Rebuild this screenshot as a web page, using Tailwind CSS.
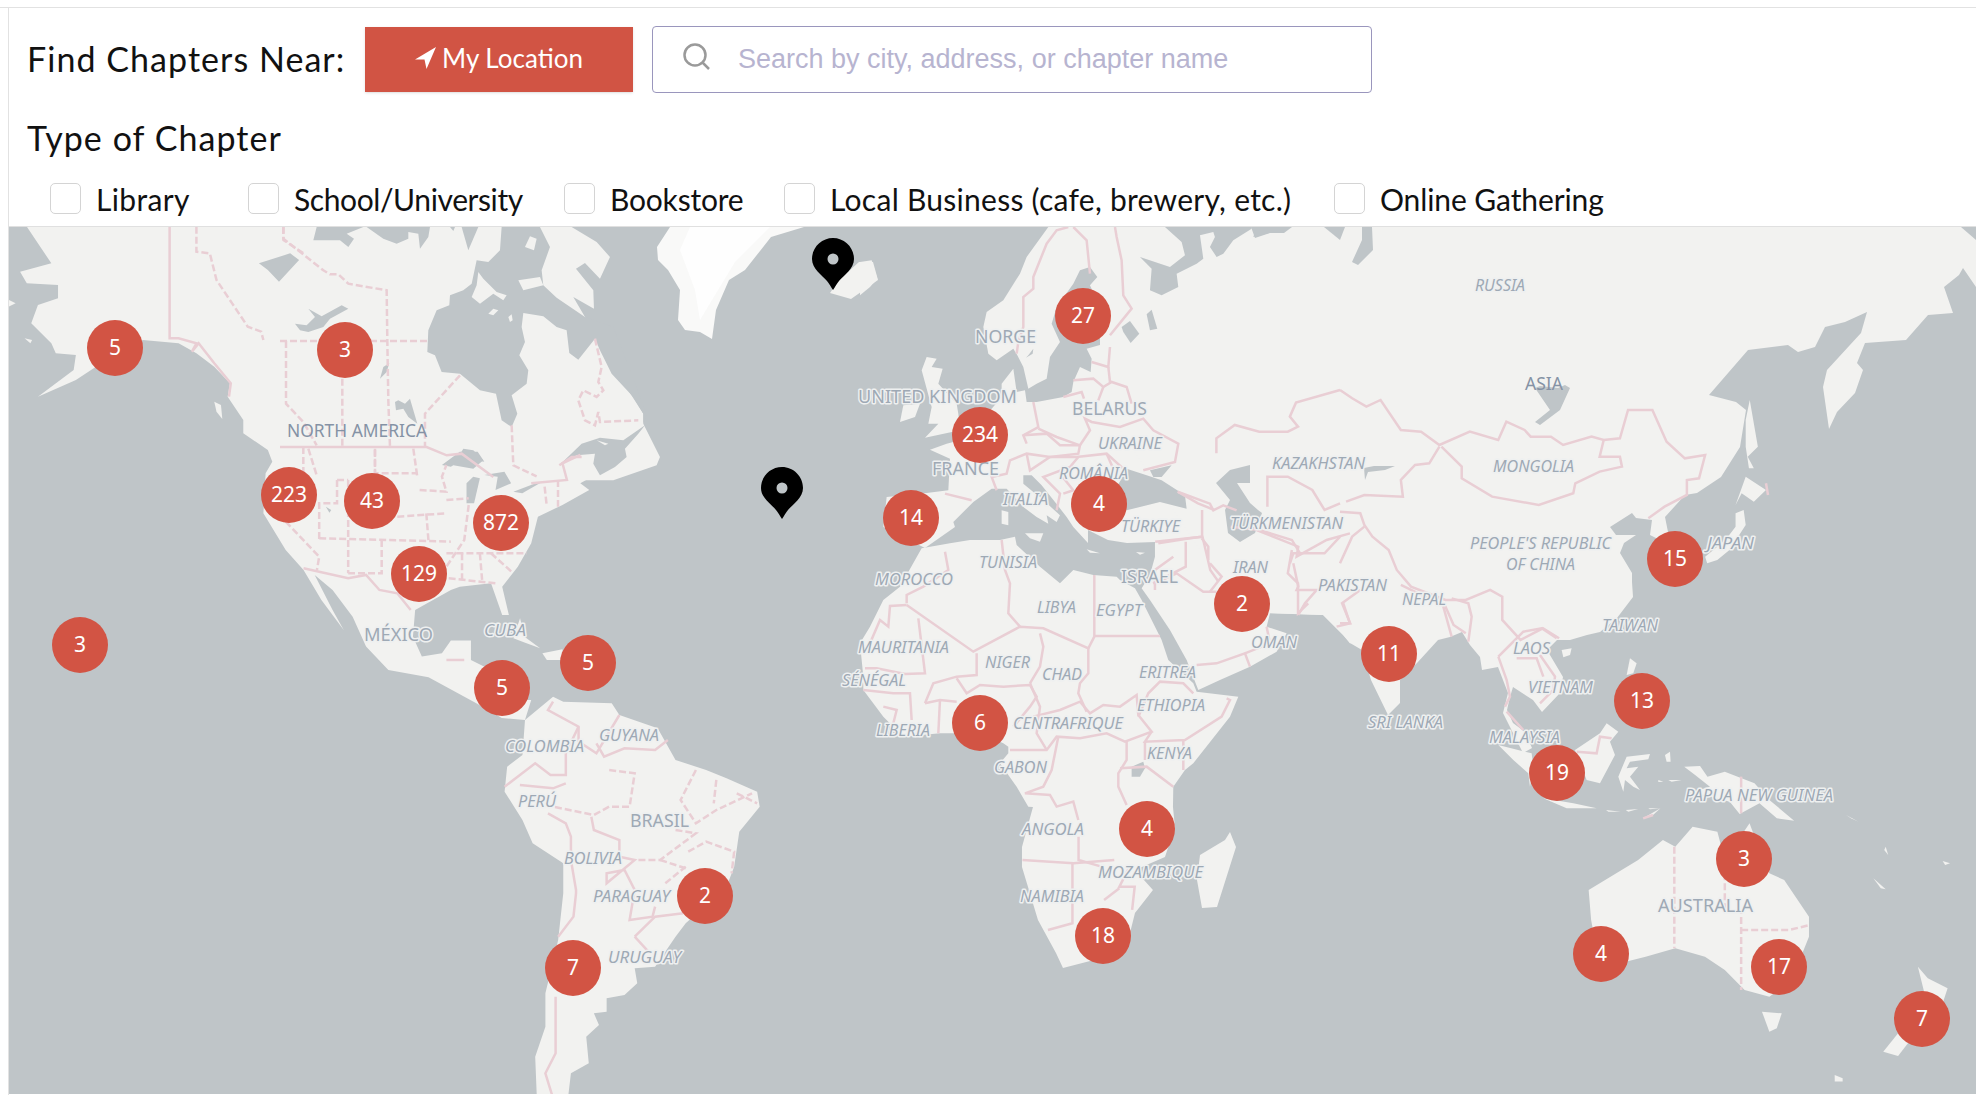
<!DOCTYPE html>
<html lang="en">
<head>
  <meta charset="UTF-8">
  <meta name="viewport" content="width=device-width, initial-scale=1.0">
  <title>Find Chapters</title>
  <script src="https://cdn.jsdelivr.net/npm/@tailwindcss/browser@4"></script>
</head>
<body class="bg-white font-['Lato',sans-serif] text-[#111] pt-[7px] overflow-hidden h-[1102px]">
  <div class="border-t border-[#e2e2e2]">
    <div class="ml-[8px] border-l border-[#e2e2e2] h-[1087px]">

      <!-- Search row -->
      <div class="flex items-center pl-[18px] pt-[17px]">
        <span class="w-[338px] text-[34px] leading-[68px] tracking-[1.05px]">Find Chapters Near:</span>
        <button class="w-[268px] h-[65px] bg-[#d15444] text-white text-[26px] flex items-center justify-center gap-[6px] shadow-sm pb-[2px]">
          <svg width="21" height="22" viewBox="0 0 21 22"><polygon class="fill-white" points="21,0 0,12.500 9.500,12.500 11.500,22"/></svg>
          My Location
        </button>
        <div class="ml-[19px] w-[720px] h-[67px] border border-[#9a96bd] rounded-[4px] flex items-center pl-[29px]">
          <svg width="30" height="27" viewBox="0 0 30 27" class="mb-[6px] fill-none stroke-[#9a9a9a] stroke-[2.500px]"><circle cx="13" cy="12" r="10.500"/><line x1="20.500" y1="19.500" x2="27" y2="26"/></svg>
          <span class="ml-[26px] font-['Liberation_Sans',sans-serif] text-[#b7b4d0] text-[27px]">Search by city, address, or chapter name</span>
        </div>
      </div>

      <!-- Chapter type filters -->
      <h2 class="pl-[18px] mt-[22px] text-[34px] leading-[46px] tracking-[1.05px]">Type of Chapter</h2>
      <div class="grid grid-cols-[198px_316px_220px_550px_auto] pl-[41px] mt-[20px] h-[31px] text-[30px] leading-[33px]">
        <label class="flex items-center gap-[15px] tracking-[0.35px]"><span class="w-[31px] h-[31px] border border-[#d4d4d4] rounded-[5px]"></span><span class="pt-[2px]">Library</span></label>
        <label class="flex items-center gap-[15px] tracking-[-0.4px]"><span class="w-[31px] h-[31px] border border-[#d4d4d4] rounded-[5px]"></span><span class="pt-[2px]">School/University</span></label>
        <label class="flex items-center gap-[15px] tracking-[-0.2px]"><span class="w-[31px] h-[31px] border border-[#d4d4d4] rounded-[5px]"></span><span class="pt-[2px]">Bookstore</span></label>
        <label class="flex items-center gap-[15px] tracking-[0.27px]"><span class="w-[31px] h-[31px] border border-[#d4d4d4] rounded-[5px]"></span><span class="pt-[2px]">Local Business (cafe, brewery, etc.)</span></label>
        <label class="flex items-center gap-[15px] tracking-[-0.1px]"><span class="w-[31px] h-[31px] border border-[#d4d4d4] rounded-[5px]"></span><span class="pt-[2px]">Online Gathering</span></label>
      </div>

      <!-- Map -->
      <div id="map" class="relative mt-[14px] h-[868px] border-t border-[#e0e0e0] bg-[#bfc5c8] overflow-hidden">
        <svg class="block" width="1967" height="867" viewBox="9 227 1967 867">
          <!-- land -->
          <g class="fill-[#f2f2f0]">
            <g transform="translate(0 220) scale(.4464 .3333)">
              <polygon points="60,20 115,130 45,155 60,190 130,195 130,235 85,255 70,310 115,370 125,400 170,405 165,450 85,530 170,480 215,440 320,360 400,370 440,400 480,440 515,490 510,530 545,600 545,640 600,690 610,725 595,760 590,880 640,990 680,1050 720,1140 770,1230 745,1170 705,1065 745,1110 790,1190 820,1280 870,1350 960,1372 1066,1449 1124,1494 1176,1500 1190,1440 1130,1440 1100,1350 1055,1320 1055,1262 1010,1262 990,1300 945,1310 925,1250 930,1170 1010,1110 1030,1100 1100,1090 1125,1185 1140,1185 1125,1100 1160,1040 1190,970 1205,890 1260,855 1320,810 1300,790 1340,760 1400,715 1330,740 1300,700 1250,730 1000,500 1000,20"/>
              <polygon points="480,545 495,555 498,597 485,575"/>
              <polygon points="55,355 72,360 68,370"/>
              <polygon points="20,240 35,250 20,260"/>
              <polygon points="1165,1195 1175,1250 1210,1285 1175,1268 1150,1255"/>
              <polygon points="1215,1300 1260,1288 1262,1320 1225,1320"/>
            </g>
            <g transform="translate(280 227) scale(.3333)">
              <polygon points="0,0 875,0 950,45 990,90 960,155 915,108 888,125 940,190 942,245 880,210 915,270 1000,420 1090,560 1090,590 1140,690 1130,715 1000,760 0,760"/>
            </g>
            <!-- South America -->
            <g transform="translate(400 660) scale(.5102 .3333)">
              <polygon points="245,180 300,110 320,125 415,130 430,165 505,205 540,300 600,330 640,355 700,395 705,440 665,515 655,620 640,680 560,790 540,830 500,920 460,925 465,970 440,1005 405,1015 405,1055 380,1060 390,1095 365,1130 370,1210 335,1240 330,1305 268,1305 265,1190 285,1100 285,1000 310,840 320,700 320,610 260,550 240,480 205,395 210,320 240,285"/>
            </g>
            <!-- Europe -->
            <g transform="translate(860 227) scale(.3333)">
              <polygon points="565,0 500,90 480,140 430,220 380,255 370,300 385,380 410,400 460,365 472,385 490,420 505,485 530,470 560,455 570,390 600,345 575,290 590,240 640,170 660,130 690,120 712,150 690,175 755,320 770,340 680,365 695,395 692,435 660,420 640,465 635,495 610,510 530,525 500,525 495,490 470,495 460,425 425,470 425,510 395,545 360,560 300,640 260,650 210,668 270,695 265,790 200,798 80,810 70,900 195,963 285,900 280,885 340,825 395,785 440,785 490,840 530,870 565,890 560,865 590,885 600,865 540,810 520,795 490,770 490,745 515,745 545,775 585,825 620,870 640,900 684,948 684,909 744,939 801,948 885,945 1300,1000 1300,0"/>
              <polygon points="185,430 200,390 230,395 215,420 248,425 235,470 290,530 295,560 300,610 195,632 235,590 205,590 215,540"/>
              <polygon points="120,585 130,535 180,530 165,570"/>
              <polygon points="425,850 445,855 445,895 425,890"/>
              <polygon points="0,105 35,100 52,155 30,180 0,205"/>
            </g>
            <polygon points="830,293 851,299 878,280 873,262 859,262 839,280"/>
            <!-- Africa and Arabia -->
            <g transform="translate(840 520) scale(.3333)">
              <polygon points="245,85 330,70 390,60 480,60 525,50 530,75 600,140 660,190 700,150 760,165 830,170 840,180 885,205 905,240 965,360 985,420 1060,490 1070,515 1195,530 1170,590 1060,730 1035,750 1000,800 999,861 1005,921 975,1011 885,1050 939,1110 885,1179 870,1239 762,1320 669,1344 648,1299 594,1200 546,1041 546,981 579,861 565,860 530,800 480,730 505,700 505,680 490,670 420,640 300,640 190,650 130,590 70,510 70,470 60,370 90,320 130,240 180,200"/>
              <polygon points="945,65 945,110 930,165 905,205 930,240 990,330 1040,420 1075,510 1140,480 1230,440 1310,395 1340,340 1280,320 1290,280 1450,285 1510,345 1530,370 1560,365 1560,0 945,0"/>
              <polygon points="555,40 610,40 600,65 570,55"/>
              <polygon points="740,88 780,100 750,98"/>
              <polygon points="888,96 915,98 900,104"/>
            </g>
            <polygon points="1230,832 1236,847 1217,907 1202,908 1197,880 1200,855 1225,840"/>
            <!-- Asia -->
            <polygon points="1100,227 1976,227 1976,287 1963,268 1959,275 1944,287 1953,313 1928,315 1906,340 1865,343 1857,363 1863,370 1855,393 1837,412 1829,429 1823,387 1827,370 1861,333 1867,312 1845,322 1825,327 1815,347 1798,352 1788,345 1748,350 1709,395 1736,402 1746,410 1740,447 1721,477 1697,493 1685,495 1665,517 1668,532 1660,540 1650,535 1652,520 1636,518 1632,513 1610,527 1616,535 1636,535 1624,543 1620,553 1632,573 1632,582 1633,597 1617,618 1600,632 1587,635 1570,640 1557,640 1547,650 1563,677 1560,693 1542,712 1533,700 1513,687 1510,697 1507,710 1513,723 1525,732 1532,748 1523,753 1503,713 1508,693 1498,667 1482,670 1480,657 1470,645 1462,632 1450,637 1438,640 1417,663 1400,680 1400,703 1388,715 1371,680 1362,650 1350,643 1343,635 1323,615 1270,613 1270,600 1200,550 1100,400"/>
            <g transform="translate(1340 220) scale(.4057 .3333)">
              <polygon points="1010,540 1030,680 1005,710 1020,745 1008,745 1000,680 1000,600"/>
              <polygon points="1000,770 1050,810 1020,845 990,820 975,855"/>
              <polygon points="975,880 995,870 1000,915 960,990 930,1020 905,1030 900,1010 950,960 975,920"/>
            </g>
            <g transform="translate(1400 560) scale(.3333)">
              <polygon points="485,270 515,265 510,285 490,292"/>
              <polygon points="680,345 690,295 710,310 700,340"/>
              <polygon points="525,570 600,520 620,490 655,515 630,545 645,585 600,670 560,660"/>
              <polygon points="295,555 395,580 400,620 390,680 385,640 340,600"/>
              <polygon points="430,715 520,730 590,745 500,745"/>
              <polygon points="655,650 680,590 750,582 745,598 690,605 680,625 715,620 690,650 720,690 700,680 675,660 670,695"/>
              <polygon points="795,585 810,575 812,605 800,605"/>
              <polygon points="775,660 790,665 775,666"/>
              <polygon points="805,660 845,660 815,665"/>
              <polygon points="745,745 780,745 750,748"/>
            </g>
            <!-- Oceania -->
            <g transform="translate(1200 660) scale(.4951 .3333)">
              <polygon points="978,320 1010,318 1025,350 1060,335 1120,370 1150,420 1200,482 1165,475 1130,430 1090,462 1070,425 1020,405 985,400 1030,380 1000,345"/>
              <polygon points="785,690 885,600 935,540 960,560 995,500 1045,515 1060,600 1110,490 1115,510 1150,640 1180,660 1230,770 1230,830 1195,960 1150,1010 1100,990 1060,930 1020,890 960,865 900,890 860,905 800,860 790,780"/>
              <polygon points="1135,1055 1175,1060 1165,1105 1150,1115"/>
              <polygon points="1450,920 1470,955 1510,985 1500,1030 1470,1040"/>
              <polygon points="1410,1120 1440,1130 1410,1188 1380,1175"/>
              <polygon points="1360,655 1385,688 1375,685"/>
              <polygon points="1500,603 1515,610 1505,615"/>
              <polygon points="1385,560 1390,585 1382,570"/>
              <polygon points="1305,465 1330,485 1315,475"/>
              <polygon points="1282,1245 1298,1255 1298,1265 1282,1265"/>
              <polygon points="820,450 850,455 825,455"/>
              <polygon points="860,450 885,447 865,455"/>
              <polygon points="895,475 930,445 915,465"/>
            </g>
          </g>
          <!-- Greenland -->
          <polygon class="fill-[#f9f9f8]" points="670,227 657,247 658,260 668,270 680,290 678,320 685,330 700,332 712,339 716,310 729,280 745,270 771,237 804,227"/>
          <polygon class="fill-[#fefefe]" points="690,227 680,250 695,290 700,320 712,300 735,262 770,227"/>
          <!-- water over land -->
          <g class="fill-[#bfc5c8]">
            <g transform="translate(0 220) scale(.4464 .3333)">
              <polygon points="580,130 650,100 670,120 625,185 600,150"/>
              <polygon points="990,735 1030,695 1070,695 1085,725 1040,715 1010,740"/>
              <polygon points="1045,850 1045,790 1060,770 1075,775 1062,850"/>
              <polygon points="1085,765 1130,755 1145,790 1110,810 1115,770"/>
              <polygon points="1150,815 1200,790 1215,785 1170,820"/>
              <polygon points="730,860 742,870 738,878"/>
            </g>
            <g transform="translate(280 227) scale(.3333)">
              <polygon points="1000,300 915,270 830,212 790,175 785,130 810,60 780,0 665,0 660,70 625,105 590,100 575,170 550,190 510,205 508,235 470,250 445,310 442,375 465,385 485,435 540,440 600,490 648,500 665,580 695,600 712,560 695,505 740,470 745,430 718,385 735,345 725,300 730,258 790,268 830,300 860,310 868,378 895,398 945,335 960,370 995,440 1060,510 1090,560 1090,590 1100,560"/>
              <polygon points="1095,595 1030,640 960,632 905,650 838,715 890,685 945,680 940,710 960,745 1005,720 1040,690 1035,665 1075,620"/>
              <polygon points="110,0 100,40 180,40 205,60 222,35 200,20 250,0"/>
              <polygon points="260,0 310,35 350,50 385,35 385,15 415,20 420,65 445,30 450,0"/>
              <polygon points="510,0 520,12 525,0"/>
              <polygon points="545,0 565,70 595,0"/>
              <polygon points="45,290 80,295 105,270 85,245 125,268 185,235 205,245 150,275 130,300 85,315 60,310"/>
              <polygon points="300,455 310,420 328,408 320,435"/>
              <polygon points="345,525 355,520 375,530 390,515 412,590 385,570 370,545 348,550"/>
              <polygon points="520,715 550,665 580,670 610,700 580,725"/>
            </g>
            <g transform="translate(860 227) scale(.3333)">
              <polygon points="785,300 810,282 838,320 812,348 790,315"/>
              <polygon points="860,262 875,248 892,305 870,310"/>
              <polygon points="915,0 965,45 975,85 930,120 840,90 875,125 870,190 905,205 955,180 950,140 1010,110 1030,95 1020,25 1060,15 1065,30 1050,60 1070,90 1090,80 1120,40 1175,5 1175,0"/>
              <polygon points="1180,30 1260,10 1260,0 1190,0"/>
              <polygon points="800,725 860,745 905,760 975,805 980,845 900,825 800,850 760,800"/>
              <polygon points="870,730 935,715 905,750 880,750"/>
              <polygon points="505,385 520,365 518,380 498,392"/>
            </g>
            <polygon points="1216,483 1230,470 1250,465 1250,483 1237,483 1250,503 1258,510 1262,513 1255,533 1240,542 1228,533 1225,510 1230,500"/>
            <polygon points="1251,227 1292,227 1284,233 1270,233 1255,238"/>
            <polygon points="1324,227 1345,227 1340,240"/>
            <polygon points="1362,227 1372,227 1373,250 1358,265 1352,262 1362,240"/>
            <polygon points="1961,227 1976,227 1976,240"/>
            <polygon points="1364,468 1374,466 1395,466 1385,470 1368,472 1365,480"/>
            <polygon points="1535,388 1540,386 1558,388 1565,385 1570,388 1560,410 1540,425 1535,422 1550,410"/>
            <g transform="translate(840 520) scale(.3333)">
              <polygon points="875,740 910,725 915,745 900,770 875,770"/>
            </g>
          </g>
          <!-- islands inside the bays -->
          <g class="fill-[#f2f2f0]" transform="translate(280 227) scale(.3333)">
            <polygon points="595,135 610,155 650,195 680,205 670,220 640,200 600,230 575,210 590,175"/>
            <polygon points="735,60 750,28 770,35 762,70"/>
            <polygon points="625,260 640,245 655,250 640,265"/>
            <polygon points="685,270 695,262 698,280 690,285"/>
            <polygon points="715,160 780,150 790,175 730,190"/>
            <polygon points="950,640 985,650 975,655"/>
          </g>
          <!-- solid borders -->
          <g class="fill-none stroke-[#e9ced4] stroke-[2.500px] **:[vector-effect:non-scaling-stroke]">
            <g transform="translate(280 227) scale(.3333)">
              <polyline points="0,660 440,660 500,685 545,680 640,750"/>
              <polyline points="838,715 875,690 905,690"/>
            </g>
            <g transform="translate(0 220) scale(.4464 .3333)">
              <polyline points="380,20 380,355 400,355 440,370 430,395 445,370 480,430 517,490 513,530"/>
              <polyline points="680,1045 780,1075 820,1065 850,1110 890,1120 920,1170"/>
              <polyline points="1190,790 1270,780 1260,730 1300,705"/>
              <polyline points="1000,1320 1040,1320"/>
            </g>
            <g transform="translate(400 660) scale(.5102 .3333)">
              <polyline points="300,125 290,150 350,200 350,245 385,280 430,165"/>
              <polyline points="385,250 400,290 440,265 500,270 525,240"/>
              <polyline points="205,380 265,310 295,345 325,345 325,280 350,200"/>
              <polyline points="325,370 300,385 235,375"/>
              <polyline points="290,460 325,490 335,530 335,600 345,690 345,700 340,770 310,830"/>
              <polyline points="375,470 380,510 430,540 430,590 460,600 405,670 405,640 440,630 460,690 450,780 495,770 500,740"/>
              <polyline points="460,830 500,770 555,760"/>
              <polyline points="460,830 490,880"/>
              <polyline points="305,1010 305,1180 285,1240 298,1305"/>
              <polyline points="1220,600 1320,610 1400,600"/>
              <polyline points="1330,530 1330,600 1375,620"/>
              <polyline points="1318,610 1318,790 1270,810"/>
              <polyline points="1430,620 1410,680 1440,680 1435,750"/>
              <polyline points="1380,720 1410,685"/>
            </g>
            <g transform="translate(840 520) scale(.3333)">
              <polyline points="315,95 325,150 250,200 200,225 200,250"/>
              <polyline points="200,255 400,395 540,320 610,325 745,385 745,460 720,490 715,520 740,575"/>
              <polyline points="485,60 495,150 510,190 505,280 540,320"/>
              <polyline points="763,165 763,350 745,385"/>
              <polyline points="763,348 960,348"/>
              <polyline points="235,295 255,460 195,462"/>
              <polyline points="200,255 150,258 145,320 120,300 90,370"/>
              <polyline points="75,445 110,445 195,462"/>
              <polyline points="410,400 410,465 350,470 280,490 255,550"/>
              <polyline points="600,340 610,380 600,440 570,490"/>
              <polyline points="350,475 380,520 420,495 490,500 570,495 590,530 570,560 520,620"/>
              <polyline points="570,490 600,560 590,640 620,690"/>
              <polyline points="580,590 660,570 720,545 750,580 790,555 840,560 890,525 895,585 935,635 855,665 800,640 720,655 650,650 620,690 510,690"/>
              <polyline points="655,650 635,750 610,800 555,820 630,825 650,860 700,845 715,900"/>
              <polyline points="935,635 915,665 1035,660 1145,590 1170,540 1160,535"/>
              <polyline points="895,590 925,520 960,485 1030,490 1060,520"/>
              <polyline points="860,665 860,720 835,760 835,800 860,855"/>
              <polyline points="915,665 915,720"/>
              <polyline points="840,745 920,740 1000,800"/>
              <polyline points="1030,660 1030,750"/>
              <polyline points="70,510 160,520 210,520 215,600"/>
              <polyline points="255,550 300,540 350,545"/>
              <polyline points="300,540 295,640"/>
              <polyline points="130,560 170,570 160,610"/>
              <polyline points="1070,435 1130,430 1215,400 1230,440"/>
              <polyline points="1215,400 1290,370 1280,320"/>
              <polyline points="945,190 1010,160 1090,215 1130,215"/>
              <polyline points="1110,130 1145,170 1110,215"/>
              <polyline points="1085,55 1105,80 1105,120"/>
              <polyline points="955,70 1050,55 1085,50"/>
              <polyline points="945,210 945,150 1000,110"/>
              <polyline points="1360,130 1375,200 1370,210 1430,210 1395,250 1375,285"/>
              <polyline points="1380,100 1360,100 1350,130"/>
              <polyline points="1250,30 1375,80 1370,110 1460,60 1530,40"/>
              <polyline points="1510,250 1530,310 1490,320"/>
            </g>
            <g transform="translate(860 227) scale(.3333)">
              <polyline points="625,0 590,10 560,50 520,150 520,185 490,210 490,300 475,345 470,380"/>
              <polyline points="640,0 680,40 690,140"/>
              <polyline points="765,0 770,30 785,100 790,205 815,245 750,325"/>
              <polyline points="750,360 745,420 695,405"/>
              <polyline points="640,460 700,455 730,480 755,465 800,480 815,530"/>
              <polyline points="610,510 665,495 672,515"/>
              <polyline points="745,420 750,465"/>
              <polyline points="730,480 715,520"/>
              <polyline points="520,525 535,600 490,625 500,650"/>
              <polyline points="535,605 590,630 660,655 690,610 675,575 695,585 780,600 850,575 880,610 955,650 945,705 850,730"/>
              <polyline points="490,625 560,620 600,655 660,655 655,680 570,690 500,680 450,700 440,740 395,750 410,790"/>
              <polyline points="500,680 510,730 570,690 650,690 740,680 790,725"/>
              <polyline points="655,690 630,720 550,750 600,800 590,850"/>
              <polyline points="600,740 640,790 610,800"/>
              <polyline points="740,680 760,725"/>
              <polyline points="255,800 335,820"/>
              <polyline points="955,795 1050,830 1060,850 1090,835 1130,850"/>
            </g>
            <g transform="translate(700 220) scale(.4082 .3333)">
              <polyline points="1265,700 1265,655 1310,615 1370,635 1440,635 1465,620 1445,590 1460,548 1568,510"/>
              <polyline points="1170,815 1220,850 1260,870"/>
              <polyline points="1230,870 1230,945 1250,1050 1270,1085"/>
              <polyline points="1115,965 1230,950"/>
              <polyline points="1190,965 1190,1040 1110,1090"/>
              <polyline points="1390,860 1390,770 1440,770 1500,810 1530,870 1568,850"/>
              <polyline points="1300,920 1370,930 1450,960 1470,1000 1530,1000 1568,950"/>
              <polyline points="1450,990 1440,1060 1465,1090 1465,1180 1490,1150"/>
            </g>
            <g transform="translate(1340 220) scale(.4057 .3333)">
              <polyline points="0,510 30,535 65,560 100,540 150,630 200,635 245,675 320,635 390,660 410,605 455,630 470,650 520,650 550,675 620,650 650,660 690,655 710,570 770,570 805,665 850,715 900,705 885,775 855,780 855,825 800,860 760,895"/>
              <polyline points="650,660 640,710 690,710 695,740 640,755 580,790 575,820 490,855 375,830 300,775 300,740 250,680"/>
              <polyline points="245,680 220,730 185,735 150,780 155,830 60,825 15,845"/>
              <polyline points="0,875 50,880 60,915 80,950 120,990 140,1050 175,1100 260,1140 310,1140 370,1110 400,1130 400,1200 445,1260 500,1225 540,1255"/>
              <polyline points="0,1030 30,950 60,920"/>
              <polyline points="50,1110 5,1150 25,1210 0,1210"/>
              <polyline points="150,1095 260,1160 280,1215 310,1240"/>
              <polyline points="1050,790 1055,825"/>
            </g>
            <g transform="translate(1400 560) scale(.3333)">
              <polyline points="295,290 330,255 370,215 425,205 470,235"/>
              <polyline points="295,290 320,360 330,410 315,440"/>
              <polyline points="350,295 410,295 430,350"/>
              <polyline points="420,285 465,350 460,390 420,430"/>
              <polyline points="130,140 155,230"/>
              <polyline points="155,115 205,130 215,170 205,245"/>
              <polyline points="320,455 370,510"/>
              <polyline points="530,575 590,580 600,530 635,535"/>
            </g>
            <g transform="translate(1200 660) scale(.4951 .3333)">
              <polyline points="1093,350 1093,460"/>
              <polyline points="895,475 915,465"/>
            </g>
          </g>
          <!-- state and province borders -->
          <g class="fill-none stroke-[#e9ced4] stroke-[2.500px] [stroke-dasharray:7_3] **:[vector-effect:non-scaling-stroke]">
            <g transform="translate(280 227) scale(.3333)">
              <polyline points="10,0 10,35 130,130 150,142 175,142 205,170 320,190 322,340 325,520 330,660"/>
              <polyline points="0,342 445,342"/>
              <polyline points="18,342 18,530 70,585 110,655"/>
              <polyline points="187,455 187,660"/>
              <polyline points="540,445 435,560 435,660"/>
              <polyline points="695,595 700,715 770,748"/>
              <polyline points="945,335 965,420 955,465 970,490 950,510 910,490 895,520 915,580 945,595 955,555 960,585 1075,580"/>
              <polyline points="70,660 70,750"/>
              <polyline points="85,665 110,745"/>
              <polyline points="285,665 285,740"/>
              <polyline points="400,665 412,750"/>
            </g>
            <g transform="translate(0 220) scale(.4464 .3333)">
              <polyline points="440,20 440,95 470,100 485,180 520,250 555,320 585,335 590,360"/>
              <polyline points="635,20 635,60 680,100"/>
              <polyline points="755,780 780,780"/>
              <polyline points="840,690 840,760 935,760"/>
              <polyline points="755,780 755,850 715,850 715,960"/>
              <polyline points="780,780 780,1060"/>
              <polyline points="640,905 715,1010 710,1050"/>
              <polyline points="715,955 1010,965"/>
              <polyline points="855,960 855,1060 780,1060"/>
              <polyline points="940,810 1000,815 990,770 1000,735"/>
              <polyline points="890,890 1000,880"/>
              <polyline points="955,880 960,965"/>
              <polyline points="1000,840 1050,835"/>
              <polyline points="1050,855 1040,960 1000,1040"/>
              <polyline points="1035,1000 1035,1090"/>
              <polyline points="1075,1000 1080,1080"/>
              <polyline points="1100,1000 1150,1060"/>
              <polyline points="1000,1000 1180,1000"/>
              <polyline points="1005,1075 1110,1090"/>
              <polyline points="1220,800 1225,860"/>
              <polyline points="1250,780 1250,860"/>
            </g>
            <g transform="translate(400 660) scale(.5102 .3333)">
              <polyline points="410,330 460,340 450,440 410,440 380,465 300,440"/>
              <polyline points="580,330 550,420 580,490 620,450 690,400"/>
              <polyline points="540,510 580,520 510,600 465,600"/>
              <polyline points="565,575 600,545 655,575 650,640"/>
              <polyline points="510,600 560,625"/>
              <polyline points="520,670 560,620"/>
              <polyline points="620,360 615,430"/>
              <polyline points="660,400 700,430"/>
            </g>
            <g transform="translate(1200 660) scale(.4951 .3333)">
              <polyline points="958,560 958,865"/>
              <polyline points="1060,640 1060,755 1093,755 1093,990"/>
              <polyline points="1093,810 1190,810 1232,795"/>
            </g>
          </g>
          <!-- upright labels -->
          <g class="font-['Noto_Sans',sans-serif] text-[18px] fill-[#9ea9b5] stroke-[#eef0f0] stroke-[3px] [paint-order:stroke] [stroke-linejoin:round]">
            <text x="975" y="343" textLength="61" lengthAdjust="spacingAndGlyphs">NORGE</text>
            <text x="858" y="403" textLength="159" lengthAdjust="spacingAndGlyphs">UNITED KINGDOM</text>
            <text x="1072" y="415" textLength="75" lengthAdjust="spacingAndGlyphs">BELARUS</text>
            <text x="932" y="475" textLength="67" lengthAdjust="spacingAndGlyphs">FRANCE</text>
            <text x="1121" y="583" textLength="57" lengthAdjust="spacingAndGlyphs">ISRAEL</text>
            <text x="364" y="641" textLength="69" lengthAdjust="spacingAndGlyphs">MÉXICO</text>
            <text x="630" y="827" textLength="59" lengthAdjust="spacingAndGlyphs">BRASIL</text>
            <text x="1658" y="912" textLength="95" lengthAdjust="spacingAndGlyphs">AUSTRALIA</text>
          </g>
          <!-- continent labels -->
          <g class="font-['Noto_Sans',sans-serif] text-[18px] fill-[#8592a5]">
            <text x="287" y="437" textLength="140" lengthAdjust="spacingAndGlyphs">NORTH AMERICA</text>
            <text x="1525" y="390" textLength="38" lengthAdjust="spacingAndGlyphs">ASIA</text>
          </g>
          <!-- italic labels -->
          <g class="font-['Noto_Sans',sans-serif] italic text-[16px] fill-[#9ea9b5] stroke-[#eef0f0] stroke-[3px] [paint-order:stroke] [stroke-linejoin:round]">
            <text x="1098" y="449" textLength="64" lengthAdjust="spacingAndGlyphs">UKRAINE</text>
            <text x="1059" y="479" textLength="69" lengthAdjust="spacingAndGlyphs">ROMÂNIA</text>
            <text x="1003" y="505" textLength="45" lengthAdjust="spacingAndGlyphs">ITALIA</text>
            <text x="1121" y="532" textLength="59" lengthAdjust="spacingAndGlyphs">TÜRKIYE</text>
            <text x="1230" y="529" textLength="113" lengthAdjust="spacingAndGlyphs">TÜRKMENISTAN</text>
            <text x="979" y="568" textLength="58" lengthAdjust="spacingAndGlyphs">TUNISIA</text>
            <text x="875" y="585" textLength="78" lengthAdjust="spacingAndGlyphs">MOROCCO</text>
            <text x="1233" y="573" textLength="35" lengthAdjust="spacingAndGlyphs">IRAN</text>
            <text x="1318" y="591" textLength="69" lengthAdjust="spacingAndGlyphs">PAKISTAN</text>
            <text x="1037" y="613" textLength="39" lengthAdjust="spacingAndGlyphs">LIBYA</text>
            <text x="1096" y="616" textLength="46" lengthAdjust="spacingAndGlyphs">EGYPT</text>
            <text x="1251" y="648" textLength="46" lengthAdjust="spacingAndGlyphs">OMAN</text>
            <text x="858" y="653" textLength="91" lengthAdjust="spacingAndGlyphs">MAURITANIA</text>
            <text x="985" y="668" textLength="45" lengthAdjust="spacingAndGlyphs">NIGER</text>
            <text x="1042" y="680" textLength="40" lengthAdjust="spacingAndGlyphs">CHAD</text>
            <text x="1139" y="678" textLength="57" lengthAdjust="spacingAndGlyphs">ERITREA</text>
            <text x="842" y="686" textLength="64" lengthAdjust="spacingAndGlyphs">SÉNÉGAL</text>
            <text x="1137" y="711" textLength="68" lengthAdjust="spacingAndGlyphs">ETHIOPIA</text>
            <text x="1013" y="729" textLength="110" lengthAdjust="spacingAndGlyphs">CENTRAFRIQUE</text>
            <text x="876" y="736" textLength="54" lengthAdjust="spacingAndGlyphs">LIBERIA</text>
            <text x="1147" y="759" textLength="45" lengthAdjust="spacingAndGlyphs">KENYA</text>
            <text x="994" y="773" textLength="53" lengthAdjust="spacingAndGlyphs">GABON</text>
            <text x="1022" y="835" textLength="62" lengthAdjust="spacingAndGlyphs">ANGOLA</text>
            <text x="1098" y="878" textLength="105" lengthAdjust="spacingAndGlyphs">MOZAMBIQUE</text>
            <text x="1020" y="902" textLength="64" lengthAdjust="spacingAndGlyphs">NAMIBIA</text>
            <text x="505" y="752" textLength="79" lengthAdjust="spacingAndGlyphs">COLOMBIA</text>
            <text x="599" y="741" textLength="60" lengthAdjust="spacingAndGlyphs">GUYANA</text>
            <text x="518" y="807" textLength="38" lengthAdjust="spacingAndGlyphs">PERÚ</text>
            <text x="564" y="864" textLength="58" lengthAdjust="spacingAndGlyphs">BOLIVIA</text>
            <text x="593" y="902" textLength="77" lengthAdjust="spacingAndGlyphs">PARAGUAY</text>
            <text x="608" y="963" textLength="73" lengthAdjust="spacingAndGlyphs">URUGUAY</text>
            <text x="484" y="636" textLength="42" lengthAdjust="spacingAndGlyphs">CUBA</text>
            <text x="1475" y="291" textLength="50" lengthAdjust="spacingAndGlyphs">RUSSIA</text>
            <text x="1272" y="469" textLength="93" lengthAdjust="spacingAndGlyphs">KAZAKHSTAN</text>
            <text x="1493" y="472" textLength="81" lengthAdjust="spacingAndGlyphs">MONGOLIA</text>
            <text x="1470" y="549" textLength="141" lengthAdjust="spacingAndGlyphs">PEOPLE'S REPUBLIC</text>
            <text x="1506" y="570" textLength="69" lengthAdjust="spacingAndGlyphs">OF CHINA</text>
            <text x="1707" y="549" textLength="47" lengthAdjust="spacingAndGlyphs">JAPAN</text>
            <text x="1402" y="605" textLength="44" lengthAdjust="spacingAndGlyphs">NEPAL</text>
            <text x="1602" y="631" textLength="56" lengthAdjust="spacingAndGlyphs">TAIWAN</text>
            <text x="1513" y="654" textLength="37" lengthAdjust="spacingAndGlyphs">LAOS</text>
            <text x="1528" y="693" textLength="65" lengthAdjust="spacingAndGlyphs">VIETNAM</text>
            <text x="1368" y="728" textLength="75" lengthAdjust="spacingAndGlyphs">SRI LANKA</text>
            <text x="1489" y="743" textLength="71" lengthAdjust="spacingAndGlyphs">MALAYSIA</text>
            <text x="1685" y="801" textLength="148" lengthAdjust="spacingAndGlyphs">PAPUA NEW GUINEA</text>
          </g>
          <!-- pins -->
          <g class="fill-black">
            <path fill-rule="evenodd" transform="translate(812 238)" d="M21 0C9.400 0 0 9.400 0 21C0 31 10 37 15 43C17 45.500 19 49 21 52C23 49 25 45.500 27 43C32 37 42 31 42 21C42 9.400 32.600 0 21 0ZM21 15.500A5.500 5.500 0 1 1 21 26.500A5.500 5.500 0 1 1 21 15.500Z"/>
            <path fill-rule="evenodd" transform="translate(761 467)" d="M21 0C9.400 0 0 9.400 0 21C0 31 10 37 15 43C17 45.500 19 49 21 52C23 49 25 45.500 27 43C32 37 42 31 42 21C42 9.400 32.600 0 21 0ZM21 15.500A5.500 5.500 0 1 1 21 26.500A5.500 5.500 0 1 1 21 15.500Z"/>
          </g>
        </svg>
      </div>
    </div>
  </div>

  <script>
    // cluster markers: page x, page y, chapter count
    const clusters = [
      [115,347,5],[345,349,3],[289,494,223],[372,500,43],[501,522,872],[419,573,129],[80,644,3],
      [588,662,5],[502,687,5],[705,895,2],[573,967,7],[980,722,6],[1147,828,4],[1103,935,18],
      [1083,315,27],[980,434,234],[911,517,14],[1099,503,4],[1242,603,2],[1675,558,15],[1389,653,11],
      [1642,700,13],[1557,772,19],[1744,858,3],[1601,953,4],[1779,966,17],[1922,1018,7]
    ];
    const map = document.getElementById('map');
    clusters.forEach(([x, y, count]) => {
      const marker = document.createElement('div');
      marker.className = "absolute w-[56px] h-[56px] rounded-full bg-[#d25444] text-white font-['Noto_Sans',sans-serif] text-[21px] flex items-center justify-center";
      marker.style.left = (x - 28 - 9) + 'px';
      marker.style.top = (y - 28 - 226) + 'px';
      marker.textContent = count;
      map.appendChild(marker);
    });
  </script>
</body>
</html>
